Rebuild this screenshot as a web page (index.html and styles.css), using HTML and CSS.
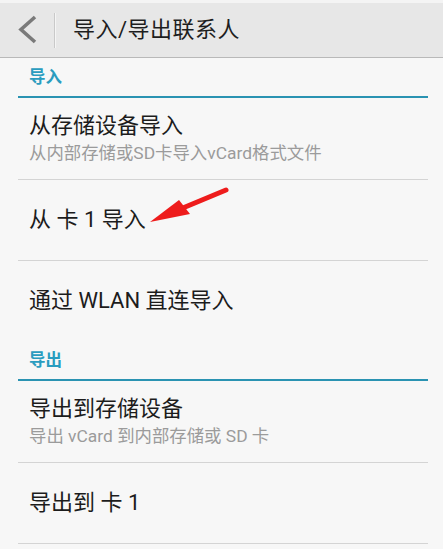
FILE: index.html
```html
<!DOCTYPE html>
<html lang="zh-CN">
<head>
<meta charset="utf-8">
<title>导入/导出联系人</title>
<link rel="stylesheet" href="styles.css">
</head>
<body>
<div class="page">
  <div class="topstrip"></div>
  <header class="appbar">
    <span class="back">
      <svg width="20" height="30" viewBox="0 0 20 30"><polyline points="17,2 3,14.5 17,27" fill="none" stroke="#7a7a7a" stroke-width="3.6" stroke-linejoin="miter"/></svg>
    </span>
    <span class="vsep"></span>
    <h1 class="title">导入/导出联系人</h1>
  </header>
  <main class="content">
    <div class="section-head">导入</div>
    <div class="item two-line">
      <div class="item-title">从存储设备导入</div>
      <div class="item-sub">从内部存储或SD卡导入vCard格式文件</div>
    </div>
    <div class="item one-line">
      <div class="item-title">从 卡 1 导入</div>
    </div>
    <div class="item one-line last">
      <div class="item-title">通过 WLAN 直连导入</div>
    </div>
    <div class="section-head">导出</div>
    <div class="item two-line">
      <div class="item-title">导出到存储设备</div>
      <div class="item-sub">导出 vCard 到内部存储或 SD 卡</div>
    </div>
    <div class="item one-line">
      <div class="item-title">导出到 卡 1</div>
    </div>
  </main>
  <svg class="arrow" width="443" height="549" viewBox="0 0 443 549">
    <line x1="226" y1="190" x2="178" y2="210" stroke="#ee1c1c" stroke-width="5" stroke-linecap="round"/>
    <polygon points="150,222 179,200 190,214" fill="#ee1c1c"/>
  </svg>
</div>
</body>
</html>
```
FILE: styles.css
```css
* { box-sizing: border-box; }
html, body { margin: 0; padding: 0; }
body {
  background: #f7f7f7;
  font-family: Roboto, "Noto Sans CJK SC", sans-serif;
  color: #202020;
}
.page {
  position: relative;
  width: 443px;
  height: 549px;
  overflow: hidden;
}
.topstrip {
  height: 3px;
  background: #f4f4f4;
}
.appbar {
  height: 55px;
  background: #e7e7e7;
  border-bottom: 1px solid #b9b9b9;
  display: flex;
  align-items: center;
}
.back {
  width: 20px;
  height: 30px;
  margin-left: 18px;
  display: flex;
}
.vsep {
  width: 2px;
  height: 35px;
  margin-left: 16px;
  background: #c9c9c9;
  border-right: 1px solid #f5f5f5;
  margin-top: 1px;
}
.title {
  margin: 0 0 0 17px;
  font-size: 22px;
  font-weight: 400;
  line-height: 30px;
  color: #1e1e1e;
  letter-spacing: 0.5px;
}
.content {
  padding: 0 15px 0 18px;
}
.section-head {
  height: 40px;
  padding: 8px 0 0 11px;
  line-height: 24px;
  font-size: 16.5px;
  font-weight: 700;
  color: #2a9cbf;
  border-bottom: 2px solid #2a93b2;
}
.item {
  padding-left: 11px;
  border-bottom: 1px solid #d4d4d4;
}
.item.last { border-bottom: none; }
.two-line {
  height: 82px;
  padding-top: 14px;
}
.one-line {
  height: 81px;
  display: flex;
  align-items: center;
}
.one-line.last { height: 80px; }
.item-title {
  font-size: 22px;
  line-height: 28px;
  color: #1c1c1c;
}
.item-sub {
  font-size: 17.4px;
  line-height: 26px;
  color: #9b9b9b;
}
.arrow {
  position: absolute;
  left: 0;
  top: 0;
  pointer-events: none;
}
```
